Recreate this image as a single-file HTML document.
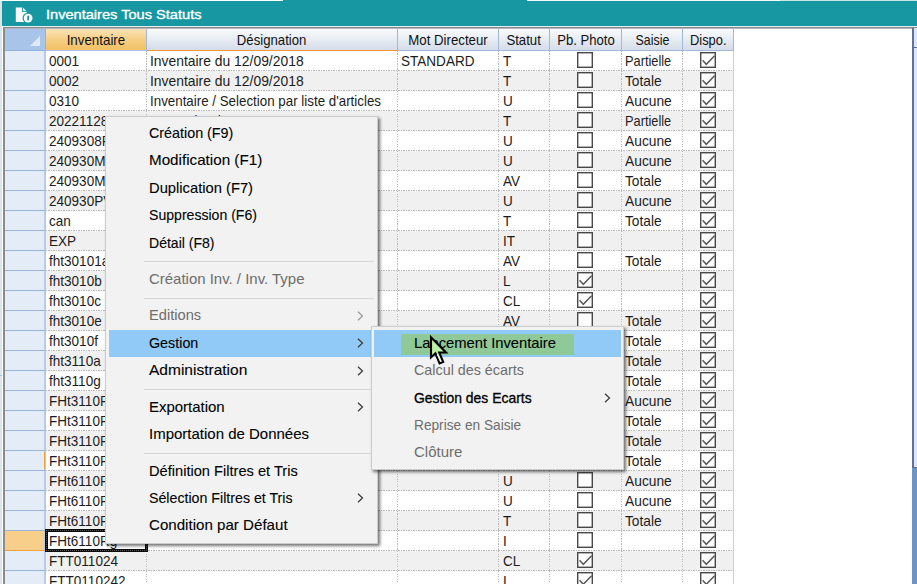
<!DOCTYPE html>
<html lang="fr"><head><meta charset="utf-8"><title>Inventaires Tous Statuts</title>
<style>
html,body{margin:0;padding:0;}
body{width:917px;height:584px;overflow:hidden;background:#fff;position:relative;font-family:"Liberation Sans",sans-serif;}
.abs{position:absolute;}
#lstrip{left:0;top:0;width:2px;height:584px;background:#dce4ec;}
#title{left:2px;top:1px;width:915px;height:25px;background:#1797a1;}
#ttext{left:46px;top:6.3px;color:#fff;font-size:13.4px;line-height:18px;white-space:nowrap;-webkit-text-stroke:0.35px #fff;}
#ttext span{display:inline-block;transform-origin:0 50%;}
#gridbg{left:3px;top:27px;width:914px;height:557px;background:#fff;border-left:2px solid #8c8c8c;border-top:1px solid #8a8a8a;box-sizing:border-box;}
#gridb2{left:5px;top:28px;width:912px;height:1px;background:#b4b7bd;}
.hd{top:29px;height:22px;box-sizing:border-box;font-size:15px;line-height:21px;text-align:center;color:#111;white-space:nowrap;background:linear-gradient(#f9fafc,#e7ecf3 50%,#d4dce9);border-right:1px solid #a3b8d6;border-bottom:1px solid #a3b8d6;}
.hd span{display:inline-block;transform-origin:50% 50%;}
.rh{left:5px;width:41px;height:20px;box-sizing:border-box;background:#e4ecf7;border-bottom:1px solid #9ab4d6;border-right:2px solid #b9cbe4;}
.row{left:45px;width:689px;height:20px;background:repeating-linear-gradient(90deg,#b9b9b9 0 1.25px,rgba(185,185,185,0) 1.25px 2.5px) 1px 19px/688px 1px no-repeat;}
.alt{background-color:#f0f0f0;}
.c{top:0;height:20px;line-height:19px;font-size:15px;color:#1c1c1c;white-space:nowrap;overflow:hidden;box-sizing:border-box;padding-left:3px;background:repeating-linear-gradient(180deg,#b9b9b9 0 1.25px,rgba(185,185,185,0) 1.25px 2.5px) right top/1px 100% no-repeat;}
.c span{display:inline-block;transform-origin:0 50%;}
.cb{position:absolute;top:1px;width:16px;height:16px;}
.cb svg{position:absolute;left:0;top:0;}
.pop{background:#f2f2f2;border:1px solid #ccc;box-sizing:border-box;box-shadow:2px 2px 3px rgba(0,0,0,.55);}
#menu{left:105px;top:116px;width:273px;height:428px;}
#sub{left:371px;top:326px;width:253px;height:144px;}
.mi{height:27px;line-height:27px;font-size:15px;color:#000;white-space:nowrap;-webkit-text-stroke:0.1px #000;}
.mi span{display:inline-block;transform-origin:0 50%;}
.dis{color:#6d6d6d;-webkit-text-stroke:0;}
.sep{height:1px;background:#d7d7d7;}
.hl{background:#91c9f7;}
.arr{width:8px;height:12px;}
</style></head><body>
<div class="abs" id="lstrip"></div>
<div class="abs" style="left:0;top:0;width:283px;height:1px;background:#fff"></div>
<div class="abs" style="left:283px;top:0;width:244px;height:1px;background:#1797a1"></div>
<div class="abs" style="left:527px;top:0;width:253px;height:1px;background:#f4f8f9"></div>
<div class="abs" style="left:780px;top:0;width:137px;height:1px;background:#cfe6e8"></div>
<div class="abs" id="title"></div>
<div class="abs" style="left:0;top:375px;width:2px;height:1px;background:#93c2f5"></div>
<svg class="abs" style="left:14px;top:5px" width="22" height="20" viewBox="14 5 22 20"><path d="M15.8 7.5 H22 V12 H26.8 V21.9 H15.8 Z" fill="#fff"/><path d="M22.9 7.6 L26.8 11.2 H22.9 Z" fill="#fff" fill-opacity=".85"/><circle cx="28.1" cy="18.1" r="5.6" fill="#1797a1"/><circle cx="28.1" cy="18.1" r="4.4" fill="#fff"/><rect x="27.3" y="15.6" width="1.7" height="5" rx=".7" fill="#1797a1"/></svg>
<div class="abs" id="ttext"><span style="transform:scaleX(1.0899)">Inventaires Tous Statuts</span></div>
<div class="abs" style="left:3px;top:26px;width:914px;height:1px;background:#e9eef0"></div>
<div class="abs" id="gridbg"></div><div class="abs" id="gridb2"></div>
<div class="abs" style="left:5px;top:29px;width:40px;height:22px;background:#a9c4e9;border-bottom:1px solid #93b3dd;box-sizing:border-box"></div>
<svg class="abs" style="left:30px;top:36px" width="11" height="11"><path d="M10 0 V10 H0 Z" fill="#dfe9f7"/></svg>
<div class="abs hd" style="left:45px;width:102px;background:linear-gradient(#fbe3b5,#f6cf86 50%,#f1c064);border-left:1px solid #f2a13f;border-right:1px solid #a3b8d6;border-bottom:1px solid #a9c4e9;"><span style="transform:scaleX(0.8896)">Inventaire</span></div>
<div class="abs hd" style="left:147px;width:251px;border-bottom:1px solid #f29536;"><span style="transform:scaleX(0.8773)">Désignation</span></div>
<div class="abs hd" style="left:398px;width:101px;"><span style="transform:scaleX(0.8819)">Mot Directeur</span></div>
<div class="abs hd" style="left:499px;width:51px;"><span style="transform:scaleX(0.8775)">Statut</span></div>
<div class="abs hd" style="left:550px;width:72px;"><span style="transform:scaleX(0.8742)">Pb. Photo</span></div>
<div class="abs hd" style="left:622px;width:61px;"><span style="transform:scaleX(0.8272)">Saisie</span></div>
<div class="abs hd" style="left:683px;width:51px;"><span style="transform:scaleX(0.8605)">Dispo.</span></div>
<div class="abs row" style="top:51px"><div class="abs c" style="left:0px;width:102px;padding-left:4px"><span style="transform:scaleX(0.9025)">0001</span></div><div class="abs c" style="left:102px;width:251px"><span style="transform:scaleX(0.9255)">Inventaire du 12/09/2018</span></div><div class="abs c" style="left:353px;width:101px"><span style="transform:scaleX(0.9029)">STANDARD</span></div><div class="abs c" style="left:454px;width:51px;padding-left:4px"><span style="transform:scaleX(0.9025)">T</span></div><div class="abs c" style="left:505px;width:72px;padding:0"></div><div class="cb" style="left:532px"><svg width="16" height="16" viewBox="0 0 16 16"><rect x=".7" y=".7" width="14.6" height="14.6" fill="#fff" stroke="#484848" stroke-width="1.4"/></svg></div><div class="abs c" style="left:577px;width:61px"><span style="transform:scaleX(0.8523)">Partielle</span></div><div class="abs c" style="left:638px;width:51px;padding:0;background:linear-gradient(#cfcfcf,#cfcfcf) right top/1px 100% no-repeat"></div><div class="cb" style="left:655px"><svg width="16" height="16" viewBox="0 0 16 16"><rect x=".7" y=".7" width="14.6" height="14.6" fill="#fff" stroke="#484848" stroke-width="1.4"/><path d="M2.6 8.2 L6.3 12.3 L14.6 3.8" fill="none" stroke="#5a5a5a" stroke-width="1.5"/></svg></div></div>
<div class="abs rh" style="top:51px;"></div>
<div class="abs row alt" style="top:71px"><div class="abs c" style="left:0px;width:102px;padding-left:4px"><span style="transform:scaleX(0.9025)">0002</span></div><div class="abs c" style="left:102px;width:251px"><span style="transform:scaleX(0.9255)">Inventaire du 12/09/2018</span></div><div class="abs c" style="left:353px;width:101px"></div><div class="abs c" style="left:454px;width:51px;padding-left:4px"><span style="transform:scaleX(0.9025)">T</span></div><div class="abs c" style="left:505px;width:72px;padding:0"></div><div class="cb" style="left:532px"><svg width="16" height="16" viewBox="0 0 16 16"><rect x=".7" y=".7" width="14.6" height="14.6" fill="#fff" stroke="#484848" stroke-width="1.4"/></svg></div><div class="abs c" style="left:577px;width:61px"><span style="transform:scaleX(0.9143)">Totale</span></div><div class="abs c" style="left:638px;width:51px;padding:0;background:linear-gradient(#cfcfcf,#cfcfcf) right top/1px 100% no-repeat"></div><div class="cb" style="left:655px"><svg width="16" height="16" viewBox="0 0 16 16"><rect x=".7" y=".7" width="14.6" height="14.6" fill="#fff" stroke="#484848" stroke-width="1.4"/><path d="M2.6 8.2 L6.3 12.3 L14.6 3.8" fill="none" stroke="#5a5a5a" stroke-width="1.5"/></svg></div></div>
<div class="abs rh" style="top:71px;"></div>
<div class="abs row" style="top:91px"><div class="abs c" style="left:0px;width:102px;padding-left:4px"><span style="transform:scaleX(0.9025)">0310</span></div><div class="abs c" style="left:102px;width:251px"><span style="transform:scaleX(0.8896)">Inventaire / Selection par liste d'articles</span></div><div class="abs c" style="left:353px;width:101px"></div><div class="abs c" style="left:454px;width:51px;padding-left:4px"><span style="transform:scaleX(0.9025)">U</span></div><div class="abs c" style="left:505px;width:72px;padding:0"></div><div class="cb" style="left:532px"><svg width="16" height="16" viewBox="0 0 16 16"><rect x=".7" y=".7" width="14.6" height="14.6" fill="#fff" stroke="#484848" stroke-width="1.4"/></svg></div><div class="abs c" style="left:577px;width:61px"><span style="transform:scaleX(0.9199)">Aucune</span></div><div class="abs c" style="left:638px;width:51px;padding:0;background:linear-gradient(#cfcfcf,#cfcfcf) right top/1px 100% no-repeat"></div><div class="cb" style="left:655px"><svg width="16" height="16" viewBox="0 0 16 16"><rect x=".7" y=".7" width="14.6" height="14.6" fill="#fff" stroke="#484848" stroke-width="1.4"/><path d="M2.6 8.2 L6.3 12.3 L14.6 3.8" fill="none" stroke="#5a5a5a" stroke-width="1.5"/></svg></div></div>
<div class="abs rh" style="top:91px;"></div>
<div class="abs row alt" style="top:111px"><div class="abs c" style="left:0px;width:102px;padding-left:4px"><span style="transform:scaleX(0.9025)">20221128</span></div><div class="abs c" style="left:102px;width:251px"><span style="transform:scaleX(0.9025)">Inventaire du 28112022</span></div><div class="abs c" style="left:353px;width:101px"></div><div class="abs c" style="left:454px;width:51px;padding-left:4px"><span style="transform:scaleX(0.9025)">T</span></div><div class="abs c" style="left:505px;width:72px;padding:0"></div><div class="cb" style="left:532px"><svg width="16" height="16" viewBox="0 0 16 16"><rect x=".7" y=".7" width="14.6" height="14.6" fill="#fff" stroke="#484848" stroke-width="1.4"/></svg></div><div class="abs c" style="left:577px;width:61px"><span style="transform:scaleX(0.8523)">Partielle</span></div><div class="abs c" style="left:638px;width:51px;padding:0;background:linear-gradient(#cfcfcf,#cfcfcf) right top/1px 100% no-repeat"></div><div class="cb" style="left:655px"><svg width="16" height="16" viewBox="0 0 16 16"><rect x=".7" y=".7" width="14.6" height="14.6" fill="#fff" stroke="#484848" stroke-width="1.4"/><path d="M2.6 8.2 L6.3 12.3 L14.6 3.8" fill="none" stroke="#5a5a5a" stroke-width="1.5"/></svg></div></div>
<div class="abs rh" style="top:111px;"></div>
<div class="abs row" style="top:131px"><div class="abs c" style="left:0px;width:102px;padding-left:4px"><span style="transform:scaleX(0.9025)">2409308R</span></div><div class="abs c" style="left:102px;width:251px"></div><div class="abs c" style="left:353px;width:101px"></div><div class="abs c" style="left:454px;width:51px;padding-left:4px"><span style="transform:scaleX(0.9025)">U</span></div><div class="abs c" style="left:505px;width:72px;padding:0"></div><div class="cb" style="left:532px"><svg width="16" height="16" viewBox="0 0 16 16"><rect x=".7" y=".7" width="14.6" height="14.6" fill="#fff" stroke="#484848" stroke-width="1.4"/></svg></div><div class="abs c" style="left:577px;width:61px"><span style="transform:scaleX(0.9199)">Aucune</span></div><div class="abs c" style="left:638px;width:51px;padding:0;background:linear-gradient(#cfcfcf,#cfcfcf) right top/1px 100% no-repeat"></div><div class="cb" style="left:655px"><svg width="16" height="16" viewBox="0 0 16 16"><rect x=".7" y=".7" width="14.6" height="14.6" fill="#fff" stroke="#484848" stroke-width="1.4"/><path d="M2.6 8.2 L6.3 12.3 L14.6 3.8" fill="none" stroke="#5a5a5a" stroke-width="1.5"/></svg></div></div>
<div class="abs rh" style="top:131px;"></div>
<div class="abs row alt" style="top:151px"><div class="abs c" style="left:0px;width:102px;padding-left:4px"><span style="transform:scaleX(0.9025)">240930MA</span></div><div class="abs c" style="left:102px;width:251px"></div><div class="abs c" style="left:353px;width:101px"></div><div class="abs c" style="left:454px;width:51px;padding-left:4px"><span style="transform:scaleX(0.9025)">U</span></div><div class="abs c" style="left:505px;width:72px;padding:0"></div><div class="cb" style="left:532px"><svg width="16" height="16" viewBox="0 0 16 16"><rect x=".7" y=".7" width="14.6" height="14.6" fill="#fff" stroke="#484848" stroke-width="1.4"/></svg></div><div class="abs c" style="left:577px;width:61px"><span style="transform:scaleX(0.9199)">Aucune</span></div><div class="abs c" style="left:638px;width:51px;padding:0;background:linear-gradient(#cfcfcf,#cfcfcf) right top/1px 100% no-repeat"></div><div class="cb" style="left:655px"><svg width="16" height="16" viewBox="0 0 16 16"><rect x=".7" y=".7" width="14.6" height="14.6" fill="#fff" stroke="#484848" stroke-width="1.4"/><path d="M2.6 8.2 L6.3 12.3 L14.6 3.8" fill="none" stroke="#5a5a5a" stroke-width="1.5"/></svg></div></div>
<div class="abs rh" style="top:151px;"></div>
<div class="abs row" style="top:171px"><div class="abs c" style="left:0px;width:102px;padding-left:4px"><span style="transform:scaleX(0.9025)">240930MA</span></div><div class="abs c" style="left:102px;width:251px"></div><div class="abs c" style="left:353px;width:101px"></div><div class="abs c" style="left:454px;width:51px;padding-left:4px"><span style="transform:scaleX(0.9025)">AV</span></div><div class="abs c" style="left:505px;width:72px;padding:0"></div><div class="cb" style="left:532px"><svg width="16" height="16" viewBox="0 0 16 16"><rect x=".7" y=".7" width="14.6" height="14.6" fill="#fff" stroke="#484848" stroke-width="1.4"/></svg></div><div class="abs c" style="left:577px;width:61px"><span style="transform:scaleX(0.9143)">Totale</span></div><div class="abs c" style="left:638px;width:51px;padding:0;background:linear-gradient(#cfcfcf,#cfcfcf) right top/1px 100% no-repeat"></div><div class="cb" style="left:655px"><svg width="16" height="16" viewBox="0 0 16 16"><rect x=".7" y=".7" width="14.6" height="14.6" fill="#fff" stroke="#484848" stroke-width="1.4"/><path d="M2.6 8.2 L6.3 12.3 L14.6 3.8" fill="none" stroke="#5a5a5a" stroke-width="1.5"/></svg></div></div>
<div class="abs rh" style="top:171px;"></div>
<div class="abs row alt" style="top:191px"><div class="abs c" style="left:0px;width:102px;padding-left:4px"><span style="transform:scaleX(0.9025)">240930PV</span></div><div class="abs c" style="left:102px;width:251px"></div><div class="abs c" style="left:353px;width:101px"></div><div class="abs c" style="left:454px;width:51px;padding-left:4px"><span style="transform:scaleX(0.9025)">U</span></div><div class="abs c" style="left:505px;width:72px;padding:0"></div><div class="cb" style="left:532px"><svg width="16" height="16" viewBox="0 0 16 16"><rect x=".7" y=".7" width="14.6" height="14.6" fill="#fff" stroke="#484848" stroke-width="1.4"/></svg></div><div class="abs c" style="left:577px;width:61px"><span style="transform:scaleX(0.9199)">Aucune</span></div><div class="abs c" style="left:638px;width:51px;padding:0;background:linear-gradient(#cfcfcf,#cfcfcf) right top/1px 100% no-repeat"></div><div class="cb" style="left:655px"><svg width="16" height="16" viewBox="0 0 16 16"><rect x=".7" y=".7" width="14.6" height="14.6" fill="#fff" stroke="#484848" stroke-width="1.4"/><path d="M2.6 8.2 L6.3 12.3 L14.6 3.8" fill="none" stroke="#5a5a5a" stroke-width="1.5"/></svg></div></div>
<div class="abs rh" style="top:191px;"></div>
<div class="abs row" style="top:211px"><div class="abs c" style="left:0px;width:102px;padding-left:4px"><span style="transform:scaleX(0.9025)">can</span></div><div class="abs c" style="left:102px;width:251px"></div><div class="abs c" style="left:353px;width:101px"></div><div class="abs c" style="left:454px;width:51px;padding-left:4px"><span style="transform:scaleX(0.9025)">T</span></div><div class="abs c" style="left:505px;width:72px;padding:0"></div><div class="cb" style="left:532px"><svg width="16" height="16" viewBox="0 0 16 16"><rect x=".7" y=".7" width="14.6" height="14.6" fill="#fff" stroke="#484848" stroke-width="1.4"/></svg></div><div class="abs c" style="left:577px;width:61px"><span style="transform:scaleX(0.9143)">Totale</span></div><div class="abs c" style="left:638px;width:51px;padding:0;background:linear-gradient(#cfcfcf,#cfcfcf) right top/1px 100% no-repeat"></div><div class="cb" style="left:655px"><svg width="16" height="16" viewBox="0 0 16 16"><rect x=".7" y=".7" width="14.6" height="14.6" fill="#fff" stroke="#484848" stroke-width="1.4"/><path d="M2.6 8.2 L6.3 12.3 L14.6 3.8" fill="none" stroke="#5a5a5a" stroke-width="1.5"/></svg></div></div>
<div class="abs rh" style="top:211px;"></div>
<div class="abs row alt" style="top:231px"><div class="abs c" style="left:0px;width:102px;padding-left:4px"><span style="transform:scaleX(0.9025)">EXP</span></div><div class="abs c" style="left:102px;width:251px"></div><div class="abs c" style="left:353px;width:101px"></div><div class="abs c" style="left:454px;width:51px;padding-left:4px"><span style="transform:scaleX(0.9025)">IT</span></div><div class="abs c" style="left:505px;width:72px;padding:0"></div><div class="cb" style="left:532px"><svg width="16" height="16" viewBox="0 0 16 16"><rect x=".7" y=".7" width="14.6" height="14.6" fill="#fff" stroke="#484848" stroke-width="1.4"/></svg></div><div class="abs c" style="left:577px;width:61px"></div><div class="abs c" style="left:638px;width:51px;padding:0;background:linear-gradient(#cfcfcf,#cfcfcf) right top/1px 100% no-repeat"></div><div class="cb" style="left:655px"><svg width="16" height="16" viewBox="0 0 16 16"><rect x=".7" y=".7" width="14.6" height="14.6" fill="#fff" stroke="#484848" stroke-width="1.4"/><path d="M2.6 8.2 L6.3 12.3 L14.6 3.8" fill="none" stroke="#5a5a5a" stroke-width="1.5"/></svg></div></div>
<div class="abs rh" style="top:231px;"></div>
<div class="abs row" style="top:251px"><div class="abs c" style="left:0px;width:102px;padding-left:4px"><span style="transform:scaleX(0.9025)">fht30101a</span></div><div class="abs c" style="left:102px;width:251px"></div><div class="abs c" style="left:353px;width:101px"></div><div class="abs c" style="left:454px;width:51px;padding-left:4px"><span style="transform:scaleX(0.9025)">AV</span></div><div class="abs c" style="left:505px;width:72px;padding:0"></div><div class="cb" style="left:532px"><svg width="16" height="16" viewBox="0 0 16 16"><rect x=".7" y=".7" width="14.6" height="14.6" fill="#fff" stroke="#484848" stroke-width="1.4"/></svg></div><div class="abs c" style="left:577px;width:61px"><span style="transform:scaleX(0.9143)">Totale</span></div><div class="abs c" style="left:638px;width:51px;padding:0;background:linear-gradient(#cfcfcf,#cfcfcf) right top/1px 100% no-repeat"></div><div class="cb" style="left:655px"><svg width="16" height="16" viewBox="0 0 16 16"><rect x=".7" y=".7" width="14.6" height="14.6" fill="#fff" stroke="#484848" stroke-width="1.4"/><path d="M2.6 8.2 L6.3 12.3 L14.6 3.8" fill="none" stroke="#5a5a5a" stroke-width="1.5"/></svg></div></div>
<div class="abs rh" style="top:251px;"></div>
<div class="abs row alt" style="top:271px"><div class="abs c" style="left:0px;width:102px;padding-left:4px"><span style="transform:scaleX(0.9025)">fht3010b</span></div><div class="abs c" style="left:102px;width:251px"></div><div class="abs c" style="left:353px;width:101px"></div><div class="abs c" style="left:454px;width:51px;padding-left:4px"><span style="transform:scaleX(0.9025)">L</span></div><div class="abs c" style="left:505px;width:72px;padding:0"></div><div class="cb" style="left:532px"><svg width="16" height="16" viewBox="0 0 16 16"><rect x=".7" y=".7" width="14.6" height="14.6" fill="#fff" stroke="#484848" stroke-width="1.4"/><path d="M2.6 8.2 L6.3 12.3 L14.6 3.8" fill="none" stroke="#5a5a5a" stroke-width="1.5"/></svg></div><div class="abs c" style="left:577px;width:61px"></div><div class="abs c" style="left:638px;width:51px;padding:0;background:linear-gradient(#cfcfcf,#cfcfcf) right top/1px 100% no-repeat"></div><div class="cb" style="left:655px"><svg width="16" height="16" viewBox="0 0 16 16"><rect x=".7" y=".7" width="14.6" height="14.6" fill="#fff" stroke="#484848" stroke-width="1.4"/><path d="M2.6 8.2 L6.3 12.3 L14.6 3.8" fill="none" stroke="#5a5a5a" stroke-width="1.5"/></svg></div></div>
<div class="abs rh" style="top:271px;"></div>
<div class="abs row" style="top:291px"><div class="abs c" style="left:0px;width:102px;padding-left:4px"><span style="transform:scaleX(0.9025)">fht3010c</span></div><div class="abs c" style="left:102px;width:251px"></div><div class="abs c" style="left:353px;width:101px"></div><div class="abs c" style="left:454px;width:51px;padding-left:4px"><span style="transform:scaleX(0.9025)">CL</span></div><div class="abs c" style="left:505px;width:72px;padding:0"></div><div class="cb" style="left:532px"><svg width="16" height="16" viewBox="0 0 16 16"><rect x=".7" y=".7" width="14.6" height="14.6" fill="#fff" stroke="#484848" stroke-width="1.4"/><path d="M2.6 8.2 L6.3 12.3 L14.6 3.8" fill="none" stroke="#5a5a5a" stroke-width="1.5"/></svg></div><div class="abs c" style="left:577px;width:61px"></div><div class="abs c" style="left:638px;width:51px;padding:0;background:linear-gradient(#cfcfcf,#cfcfcf) right top/1px 100% no-repeat"></div><div class="cb" style="left:655px"><svg width="16" height="16" viewBox="0 0 16 16"><rect x=".7" y=".7" width="14.6" height="14.6" fill="#fff" stroke="#484848" stroke-width="1.4"/><path d="M2.6 8.2 L6.3 12.3 L14.6 3.8" fill="none" stroke="#5a5a5a" stroke-width="1.5"/></svg></div></div>
<div class="abs rh" style="top:291px;"></div>
<div class="abs row alt" style="top:311px"><div class="abs c" style="left:0px;width:102px;padding-left:4px"><span style="transform:scaleX(0.9025)">fht3010e</span></div><div class="abs c" style="left:102px;width:251px"></div><div class="abs c" style="left:353px;width:101px"></div><div class="abs c" style="left:454px;width:51px;padding-left:4px"><span style="transform:scaleX(0.9025)">AV</span></div><div class="abs c" style="left:505px;width:72px;padding:0"></div><div class="cb" style="left:532px"><svg width="16" height="16" viewBox="0 0 16 16"><rect x=".7" y=".7" width="14.6" height="14.6" fill="#fff" stroke="#484848" stroke-width="1.4"/></svg></div><div class="abs c" style="left:577px;width:61px"><span style="transform:scaleX(0.9143)">Totale</span></div><div class="abs c" style="left:638px;width:51px;padding:0;background:linear-gradient(#cfcfcf,#cfcfcf) right top/1px 100% no-repeat"></div><div class="cb" style="left:655px"><svg width="16" height="16" viewBox="0 0 16 16"><rect x=".7" y=".7" width="14.6" height="14.6" fill="#fff" stroke="#484848" stroke-width="1.4"/><path d="M2.6 8.2 L6.3 12.3 L14.6 3.8" fill="none" stroke="#5a5a5a" stroke-width="1.5"/></svg></div></div>
<div class="abs rh" style="top:311px;"></div>
<div class="abs row" style="top:331px"><div class="abs c" style="left:0px;width:102px;padding-left:4px"><span style="transform:scaleX(0.9025)">fht3010f</span></div><div class="abs c" style="left:102px;width:251px"></div><div class="abs c" style="left:353px;width:101px"></div><div class="abs c" style="left:454px;width:51px;padding-left:4px"><span style="transform:scaleX(0.9025)">AV</span></div><div class="abs c" style="left:505px;width:72px;padding:0"></div><div class="cb" style="left:532px"><svg width="16" height="16" viewBox="0 0 16 16"><rect x=".7" y=".7" width="14.6" height="14.6" fill="#fff" stroke="#484848" stroke-width="1.4"/></svg></div><div class="abs c" style="left:577px;width:61px"><span style="transform:scaleX(0.9143)">Totale</span></div><div class="abs c" style="left:638px;width:51px;padding:0;background:linear-gradient(#cfcfcf,#cfcfcf) right top/1px 100% no-repeat"></div><div class="cb" style="left:655px"><svg width="16" height="16" viewBox="0 0 16 16"><rect x=".7" y=".7" width="14.6" height="14.6" fill="#fff" stroke="#484848" stroke-width="1.4"/><path d="M2.6 8.2 L6.3 12.3 L14.6 3.8" fill="none" stroke="#5a5a5a" stroke-width="1.5"/></svg></div></div>
<div class="abs rh" style="top:331px;"></div>
<div class="abs row alt" style="top:351px"><div class="abs c" style="left:0px;width:102px;padding-left:4px"><span style="transform:scaleX(0.9025)">fht3110a</span></div><div class="abs c" style="left:102px;width:251px"></div><div class="abs c" style="left:353px;width:101px"></div><div class="abs c" style="left:454px;width:51px;padding-left:4px"><span style="transform:scaleX(0.9025)">AV</span></div><div class="abs c" style="left:505px;width:72px;padding:0"></div><div class="cb" style="left:532px"><svg width="16" height="16" viewBox="0 0 16 16"><rect x=".7" y=".7" width="14.6" height="14.6" fill="#fff" stroke="#484848" stroke-width="1.4"/></svg></div><div class="abs c" style="left:577px;width:61px"><span style="transform:scaleX(0.9143)">Totale</span></div><div class="abs c" style="left:638px;width:51px;padding:0;background:linear-gradient(#cfcfcf,#cfcfcf) right top/1px 100% no-repeat"></div><div class="cb" style="left:655px"><svg width="16" height="16" viewBox="0 0 16 16"><rect x=".7" y=".7" width="14.6" height="14.6" fill="#fff" stroke="#484848" stroke-width="1.4"/><path d="M2.6 8.2 L6.3 12.3 L14.6 3.8" fill="none" stroke="#5a5a5a" stroke-width="1.5"/></svg></div></div>
<div class="abs rh" style="top:351px;"></div>
<div class="abs row" style="top:371px"><div class="abs c" style="left:0px;width:102px;padding-left:4px"><span style="transform:scaleX(0.9025)">fht3110g</span></div><div class="abs c" style="left:102px;width:251px"></div><div class="abs c" style="left:353px;width:101px"></div><div class="abs c" style="left:454px;width:51px;padding-left:4px"><span style="transform:scaleX(0.9025)">AV</span></div><div class="abs c" style="left:505px;width:72px;padding:0"></div><div class="cb" style="left:532px"><svg width="16" height="16" viewBox="0 0 16 16"><rect x=".7" y=".7" width="14.6" height="14.6" fill="#fff" stroke="#484848" stroke-width="1.4"/></svg></div><div class="abs c" style="left:577px;width:61px"><span style="transform:scaleX(0.9143)">Totale</span></div><div class="abs c" style="left:638px;width:51px;padding:0;background:linear-gradient(#cfcfcf,#cfcfcf) right top/1px 100% no-repeat"></div><div class="cb" style="left:655px"><svg width="16" height="16" viewBox="0 0 16 16"><rect x=".7" y=".7" width="14.6" height="14.6" fill="#fff" stroke="#484848" stroke-width="1.4"/><path d="M2.6 8.2 L6.3 12.3 L14.6 3.8" fill="none" stroke="#5a5a5a" stroke-width="1.5"/></svg></div></div>
<div class="abs rh" style="top:371px;"></div>
<div class="abs row alt" style="top:391px"><div class="abs c" style="left:0px;width:102px;padding-left:4px"><span style="transform:scaleX(0.9025)">FHt3110R</span></div><div class="abs c" style="left:102px;width:251px"></div><div class="abs c" style="left:353px;width:101px"></div><div class="abs c" style="left:454px;width:51px;padding-left:4px"><span style="transform:scaleX(0.9025)">U</span></div><div class="abs c" style="left:505px;width:72px;padding:0"></div><div class="cb" style="left:532px"><svg width="16" height="16" viewBox="0 0 16 16"><rect x=".7" y=".7" width="14.6" height="14.6" fill="#fff" stroke="#484848" stroke-width="1.4"/></svg></div><div class="abs c" style="left:577px;width:61px"><span style="transform:scaleX(0.9199)">Aucune</span></div><div class="abs c" style="left:638px;width:51px;padding:0;background:linear-gradient(#cfcfcf,#cfcfcf) right top/1px 100% no-repeat"></div><div class="cb" style="left:655px"><svg width="16" height="16" viewBox="0 0 16 16"><rect x=".7" y=".7" width="14.6" height="14.6" fill="#fff" stroke="#484848" stroke-width="1.4"/><path d="M2.6 8.2 L6.3 12.3 L14.6 3.8" fill="none" stroke="#5a5a5a" stroke-width="1.5"/></svg></div></div>
<div class="abs rh" style="top:391px;"></div>
<div class="abs row" style="top:411px"><div class="abs c" style="left:0px;width:102px;padding-left:4px"><span style="transform:scaleX(0.9025)">FHt3110R</span></div><div class="abs c" style="left:102px;width:251px"></div><div class="abs c" style="left:353px;width:101px"></div><div class="abs c" style="left:454px;width:51px;padding-left:4px"><span style="transform:scaleX(0.9025)">AV</span></div><div class="abs c" style="left:505px;width:72px;padding:0"></div><div class="cb" style="left:532px"><svg width="16" height="16" viewBox="0 0 16 16"><rect x=".7" y=".7" width="14.6" height="14.6" fill="#fff" stroke="#484848" stroke-width="1.4"/></svg></div><div class="abs c" style="left:577px;width:61px"><span style="transform:scaleX(0.9143)">Totale</span></div><div class="abs c" style="left:638px;width:51px;padding:0;background:linear-gradient(#cfcfcf,#cfcfcf) right top/1px 100% no-repeat"></div><div class="cb" style="left:655px"><svg width="16" height="16" viewBox="0 0 16 16"><rect x=".7" y=".7" width="14.6" height="14.6" fill="#fff" stroke="#484848" stroke-width="1.4"/><path d="M2.6 8.2 L6.3 12.3 L14.6 3.8" fill="none" stroke="#5a5a5a" stroke-width="1.5"/></svg></div></div>
<div class="abs rh" style="top:411px;"></div>
<div class="abs row alt" style="top:431px"><div class="abs c" style="left:0px;width:102px;padding-left:4px"><span style="transform:scaleX(0.9025)">FHt3110R</span></div><div class="abs c" style="left:102px;width:251px"></div><div class="abs c" style="left:353px;width:101px"></div><div class="abs c" style="left:454px;width:51px;padding-left:4px"><span style="transform:scaleX(0.9025)">AV</span></div><div class="abs c" style="left:505px;width:72px;padding:0"></div><div class="cb" style="left:532px"><svg width="16" height="16" viewBox="0 0 16 16"><rect x=".7" y=".7" width="14.6" height="14.6" fill="#fff" stroke="#484848" stroke-width="1.4"/></svg></div><div class="abs c" style="left:577px;width:61px"><span style="transform:scaleX(0.9143)">Totale</span></div><div class="abs c" style="left:638px;width:51px;padding:0;background:linear-gradient(#cfcfcf,#cfcfcf) right top/1px 100% no-repeat"></div><div class="cb" style="left:655px"><svg width="16" height="16" viewBox="0 0 16 16"><rect x=".7" y=".7" width="14.6" height="14.6" fill="#fff" stroke="#484848" stroke-width="1.4"/><path d="M2.6 8.2 L6.3 12.3 L14.6 3.8" fill="none" stroke="#5a5a5a" stroke-width="1.5"/></svg></div></div>
<div class="abs rh" style="top:431px;"></div>
<div class="abs row" style="top:451px"><div class="abs c" style="left:0px;width:102px;padding-left:4px"><span style="transform:scaleX(0.9025)">FHt3110R</span></div><div class="abs c" style="left:102px;width:251px"></div><div class="abs c" style="left:353px;width:101px"></div><div class="abs c" style="left:454px;width:51px;padding-left:4px"><span style="transform:scaleX(0.9025)">AV</span></div><div class="abs c" style="left:505px;width:72px;padding:0"></div><div class="cb" style="left:532px"><svg width="16" height="16" viewBox="0 0 16 16"><rect x=".7" y=".7" width="14.6" height="14.6" fill="#fff" stroke="#484848" stroke-width="1.4"/></svg></div><div class="abs c" style="left:577px;width:61px"><span style="transform:scaleX(0.9143)">Totale</span></div><div class="abs c" style="left:638px;width:51px;padding:0;background:linear-gradient(#cfcfcf,#cfcfcf) right top/1px 100% no-repeat"></div><div class="cb" style="left:655px"><svg width="16" height="16" viewBox="0 0 16 16"><rect x=".7" y=".7" width="14.6" height="14.6" fill="#fff" stroke="#484848" stroke-width="1.4"/><path d="M2.6 8.2 L6.3 12.3 L14.6 3.8" fill="none" stroke="#5a5a5a" stroke-width="1.5"/></svg></div></div>
<div class="abs rh" style="top:451px;"></div>
<div class="abs row alt" style="top:471px"><div class="abs c" style="left:0px;width:102px;padding-left:4px"><span style="transform:scaleX(0.9025)">FHt6110R</span></div><div class="abs c" style="left:102px;width:251px"></div><div class="abs c" style="left:353px;width:101px"></div><div class="abs c" style="left:454px;width:51px;padding-left:4px"><span style="transform:scaleX(0.9025)">U</span></div><div class="abs c" style="left:505px;width:72px;padding:0"></div><div class="cb" style="left:532px"><svg width="16" height="16" viewBox="0 0 16 16"><rect x=".7" y=".7" width="14.6" height="14.6" fill="#fff" stroke="#484848" stroke-width="1.4"/></svg></div><div class="abs c" style="left:577px;width:61px"><span style="transform:scaleX(0.9199)">Aucune</span></div><div class="abs c" style="left:638px;width:51px;padding:0;background:linear-gradient(#cfcfcf,#cfcfcf) right top/1px 100% no-repeat"></div><div class="cb" style="left:655px"><svg width="16" height="16" viewBox="0 0 16 16"><rect x=".7" y=".7" width="14.6" height="14.6" fill="#fff" stroke="#484848" stroke-width="1.4"/><path d="M2.6 8.2 L6.3 12.3 L14.6 3.8" fill="none" stroke="#5a5a5a" stroke-width="1.5"/></svg></div></div>
<div class="abs rh" style="top:471px;"></div>
<div class="abs row" style="top:491px"><div class="abs c" style="left:0px;width:102px;padding-left:4px"><span style="transform:scaleX(0.9025)">FHt6110R</span></div><div class="abs c" style="left:102px;width:251px"></div><div class="abs c" style="left:353px;width:101px"></div><div class="abs c" style="left:454px;width:51px;padding-left:4px"><span style="transform:scaleX(0.9025)">U</span></div><div class="abs c" style="left:505px;width:72px;padding:0"></div><div class="cb" style="left:532px"><svg width="16" height="16" viewBox="0 0 16 16"><rect x=".7" y=".7" width="14.6" height="14.6" fill="#fff" stroke="#484848" stroke-width="1.4"/></svg></div><div class="abs c" style="left:577px;width:61px"><span style="transform:scaleX(0.9199)">Aucune</span></div><div class="abs c" style="left:638px;width:51px;padding:0;background:linear-gradient(#cfcfcf,#cfcfcf) right top/1px 100% no-repeat"></div><div class="cb" style="left:655px"><svg width="16" height="16" viewBox="0 0 16 16"><rect x=".7" y=".7" width="14.6" height="14.6" fill="#fff" stroke="#484848" stroke-width="1.4"/><path d="M2.6 8.2 L6.3 12.3 L14.6 3.8" fill="none" stroke="#5a5a5a" stroke-width="1.5"/></svg></div></div>
<div class="abs rh" style="top:491px;"></div>
<div class="abs row alt" style="top:511px"><div class="abs c" style="left:0px;width:102px;padding-left:4px"><span style="transform:scaleX(0.9025)">FHt6110R</span></div><div class="abs c" style="left:102px;width:251px"></div><div class="abs c" style="left:353px;width:101px"></div><div class="abs c" style="left:454px;width:51px;padding-left:4px"><span style="transform:scaleX(0.9025)">T</span></div><div class="abs c" style="left:505px;width:72px;padding:0"></div><div class="cb" style="left:532px"><svg width="16" height="16" viewBox="0 0 16 16"><rect x=".7" y=".7" width="14.6" height="14.6" fill="#fff" stroke="#484848" stroke-width="1.4"/></svg></div><div class="abs c" style="left:577px;width:61px"><span style="transform:scaleX(0.9143)">Totale</span></div><div class="abs c" style="left:638px;width:51px;padding:0;background:linear-gradient(#cfcfcf,#cfcfcf) right top/1px 100% no-repeat"></div><div class="cb" style="left:655px"><svg width="16" height="16" viewBox="0 0 16 16"><rect x=".7" y=".7" width="14.6" height="14.6" fill="#fff" stroke="#484848" stroke-width="1.4"/><path d="M2.6 8.2 L6.3 12.3 L14.6 3.8" fill="none" stroke="#5a5a5a" stroke-width="1.5"/></svg></div></div>
<div class="abs rh" style="top:511px;"></div>
<div class="abs row" style="top:531px"><div class="abs c" style="left:0px;width:102px;padding-left:4px"><span style="transform:scaleX(0.9025)">FHt6110Rg</span></div><div class="abs c" style="left:102px;width:251px"></div><div class="abs c" style="left:353px;width:101px"></div><div class="abs c" style="left:454px;width:51px;padding-left:4px"><span style="transform:scaleX(0.9025)">I</span></div><div class="abs c" style="left:505px;width:72px;padding:0"></div><div class="cb" style="left:532px"><svg width="16" height="16" viewBox="0 0 16 16"><rect x=".7" y=".7" width="14.6" height="14.6" fill="#fff" stroke="#484848" stroke-width="1.4"/></svg></div><div class="abs c" style="left:577px;width:61px"></div><div class="abs c" style="left:638px;width:51px;padding:0;background:linear-gradient(#cfcfcf,#cfcfcf) right top/1px 100% no-repeat"></div><div class="cb" style="left:655px"><svg width="16" height="16" viewBox="0 0 16 16"><rect x=".7" y=".7" width="14.6" height="14.6" fill="#fff" stroke="#484848" stroke-width="1.4"/><path d="M2.6 8.2 L6.3 12.3 L14.6 3.8" fill="none" stroke="#5a5a5a" stroke-width="1.5"/></svg></div></div>
<div class="abs rh" style="top:531px;background:#f8cf8a;border-bottom:1px solid #f2a13f;"></div>
<div class="abs row alt" style="top:551px"><div class="abs c" style="left:0px;width:102px;padding-left:4px"><span style="transform:scaleX(0.9025)">FTT011024</span></div><div class="abs c" style="left:102px;width:251px"></div><div class="abs c" style="left:353px;width:101px"></div><div class="abs c" style="left:454px;width:51px;padding-left:4px"><span style="transform:scaleX(0.9025)">CL</span></div><div class="abs c" style="left:505px;width:72px;padding:0"></div><div class="cb" style="left:532px"><svg width="16" height="16" viewBox="0 0 16 16"><rect x=".7" y=".7" width="14.6" height="14.6" fill="#fff" stroke="#484848" stroke-width="1.4"/><path d="M2.6 8.2 L6.3 12.3 L14.6 3.8" fill="none" stroke="#5a5a5a" stroke-width="1.5"/></svg></div><div class="abs c" style="left:577px;width:61px"></div><div class="abs c" style="left:638px;width:51px;padding:0;background:linear-gradient(#cfcfcf,#cfcfcf) right top/1px 100% no-repeat"></div><div class="cb" style="left:655px"><svg width="16" height="16" viewBox="0 0 16 16"><rect x=".7" y=".7" width="14.6" height="14.6" fill="#fff" stroke="#484848" stroke-width="1.4"/><path d="M2.6 8.2 L6.3 12.3 L14.6 3.8" fill="none" stroke="#5a5a5a" stroke-width="1.5"/></svg></div></div>
<div class="abs rh" style="top:551px;"></div>
<div class="abs row" style="top:571px"><div class="abs c" style="left:0px;width:102px;padding-left:4px"><span style="transform:scaleX(0.9025)">FTT0110242</span></div><div class="abs c" style="left:102px;width:251px"></div><div class="abs c" style="left:353px;width:101px"></div><div class="abs c" style="left:454px;width:51px;padding-left:4px"><span style="transform:scaleX(0.9025)">I</span></div><div class="abs c" style="left:505px;width:72px;padding:0"></div><div class="cb" style="left:532px"><svg width="16" height="16" viewBox="0 0 16 16"><rect x=".7" y=".7" width="14.6" height="14.6" fill="#fff" stroke="#484848" stroke-width="1.4"/><path d="M2.6 8.2 L6.3 12.3 L14.6 3.8" fill="none" stroke="#5a5a5a" stroke-width="1.5"/></svg></div><div class="abs c" style="left:577px;width:61px"></div><div class="abs c" style="left:638px;width:51px;padding:0;background:linear-gradient(#cfcfcf,#cfcfcf) right top/1px 100% no-repeat"></div><div class="cb" style="left:655px"><svg width="16" height="16" viewBox="0 0 16 16"><rect x=".7" y=".7" width="14.6" height="14.6" fill="#fff" stroke="#484848" stroke-width="1.4"/><path d="M2.6 8.2 L6.3 12.3 L14.6 3.8" fill="none" stroke="#5a5a5a" stroke-width="1.5"/></svg></div></div>
<div class="abs rh" style="top:571px;"></div>
<div class="abs" style="left:45px;top:529px;width:103px;height:23px;box-sizing:border-box;border:3px solid #0c0c0c;outline:1px dotted rgba(255,255,255,.3);outline-offset:-2px"></div>
<div class="abs" style="left:44px;top:452px;width:1px;height:17px;background:#f2a13f"></div>
<div class="abs" style="left:912px;top:28px;width:5px;height:440px;background:#dbe6f7;border-left:2px solid #61739b;box-sizing:border-box"></div>
<div class="abs" style="left:912px;top:47px;width:5px;height:1px;background:#5a6d96"></div>
<div class="abs" style="left:912px;top:468px;width:5px;height:116px;background:#6d94c6"></div>
<div class="abs" style="left:912px;top:467px;width:5px;height:1px;background:#5a6d96"></div>
<div class="abs pop" id="menu">
<div class="abs mi" style="left:43.3px;top:2px"><span style="transform:scaleX(0.9541)">Création (F9)</span></div>
<div class="abs mi" style="left:43.3px;top:29px"><span style="transform:scaleX(1.0134)">Modification (F1)</span></div>
<div class="abs mi" style="left:43.3px;top:57px"><span style="transform:scaleX(0.9823)">Duplication (F7)</span></div>
<div class="abs mi" style="left:43.3px;top:84px"><span style="transform:scaleX(0.9386)">Suppression (F6)</span></div>
<div class="abs mi" style="left:43.3px;top:112px"><span style="transform:scaleX(0.9355)">Détail (F8)</span></div>
<div class="abs mi dis" style="left:43.3px;top:148px"><span style="transform:scaleX(0.9973)">Création Inv. / Inv. Type</span></div>
<div class="abs mi dis" style="left:43.3px;top:184px"><span style="transform:scaleX(0.9761)">Editions</span></div><svg class="abs arr" style="left:251px;top:192.7px" viewBox="0 0 8 12"><path d="M1 1.8 L5.5 6 L1 10.2" fill="none" stroke="#9a9a9a" stroke-width="1.25"/></svg>
<div class="abs hl" style="left:3px;top:213px;width:265px;height:27px"></div><div class="abs mi" style="left:43.3px;top:212px"><span style="transform:scaleX(0.9535)">Gestion</span></div><svg class="abs arr" style="left:251px;top:220.2px" viewBox="0 0 8 12"><path d="M1 1.8 L5.5 6 L1 10.2" fill="none" stroke="#3a3a3a" stroke-width="1.25"/></svg>
<div class="abs mi" style="left:43.3px;top:239px"><span style="transform:scaleX(1.0342)">Administration</span></div><svg class="abs arr" style="left:251px;top:247.8px" viewBox="0 0 8 12"><path d="M1 1.8 L5.5 6 L1 10.2" fill="none" stroke="#3a3a3a" stroke-width="1.25"/></svg>
<div class="abs mi" style="left:43.3px;top:276px"><span style="transform:scaleX(0.9975)">Exportation</span></div><svg class="abs arr" style="left:251px;top:284.0px" viewBox="0 0 8 12"><path d="M1 1.8 L5.5 6 L1 10.2" fill="none" stroke="#3a3a3a" stroke-width="1.25"/></svg>
<div class="abs mi" style="left:43.3px;top:303px"><span style="transform:scaleX(0.9993)">Importation de Données</span></div>
<div class="abs mi" style="left:43.3px;top:340px"><span style="transform:scaleX(0.9748)">Définition Filtres et Tris</span></div>
<div class="abs mi" style="left:43.3px;top:367px"><span style="transform:scaleX(0.9465)">Sélection Filtres et Tris</span></div><svg class="abs arr" style="left:251px;top:375.3px" viewBox="0 0 8 12"><path d="M1 1.8 L5.5 6 L1 10.2" fill="none" stroke="#3a3a3a" stroke-width="1.25"/></svg>
<div class="abs mi" style="left:43.3px;top:394px"><span style="transform:scaleX(1.0073)">Condition par Défaut</span></div>
<div class="abs sep" style="left:38px;top:144px;width:230px"></div>
<div class="abs sep" style="left:38px;top:181px;width:230px"></div>
<div class="abs sep" style="left:38px;top:272px;width:230px"></div>
<div class="abs sep" style="left:38px;top:336px;width:230px"></div>
</div>
<div class="abs pop" id="sub">
<div class="abs hl" style="left:2px;top:3px;width:247px;height:27px"></div><div class="abs" style="left:29px;top:7px;width:173px;height:21px;background:#8fc997"></div>
<div class="abs mi" style="left:42.4px;top:2px"><span style="transform:scaleX(0.9843)">Lancement Inventaire</span></div>
<div class="abs mi dis" style="left:42.4px;top:29px"><span style="transform:scaleX(0.9551)">Calcul des écarts</span></div>
<div class="abs mi" style="left:42.4px;top:57px;-webkit-text-stroke:0.32px #000"><span style="transform:scaleX(0.9279)">Gestion des Ecarts</span></div><svg class="abs arr" style="left:232px;top:65.4px" viewBox="0 0 8 12"><path d="M1 1.8 L5.5 6 L1 10.2" fill="none" stroke="#3a3a3a" stroke-width="1.25"/></svg>
<div class="abs mi dis" style="left:42.4px;top:84px"><span style="transform:scaleX(0.9119)">Reprise en Saisie</span></div>
<div class="abs mi dis" style="left:42.4px;top:111px"><span style="transform:scaleX(0.9988)">Clôture</span></div>
</div>
<svg class="abs" style="left:425px;top:330px" width="28" height="40" viewBox="425 330 28 40"><path d="M431.0 337.2 V357.4 L435.4 353.3 L439.6 363.5 L443.2 362.0 L439.2 352.5 H446.0 Z" fill="#bdf0a2" stroke="#000" stroke-width="2.1" stroke-linejoin="miter"/><path d="M436.9 354.6 L438.3 354.2 L441.6 361.4 L440.3 362.0 Z" fill="#f0f4ea"/></svg>
</body></html>
